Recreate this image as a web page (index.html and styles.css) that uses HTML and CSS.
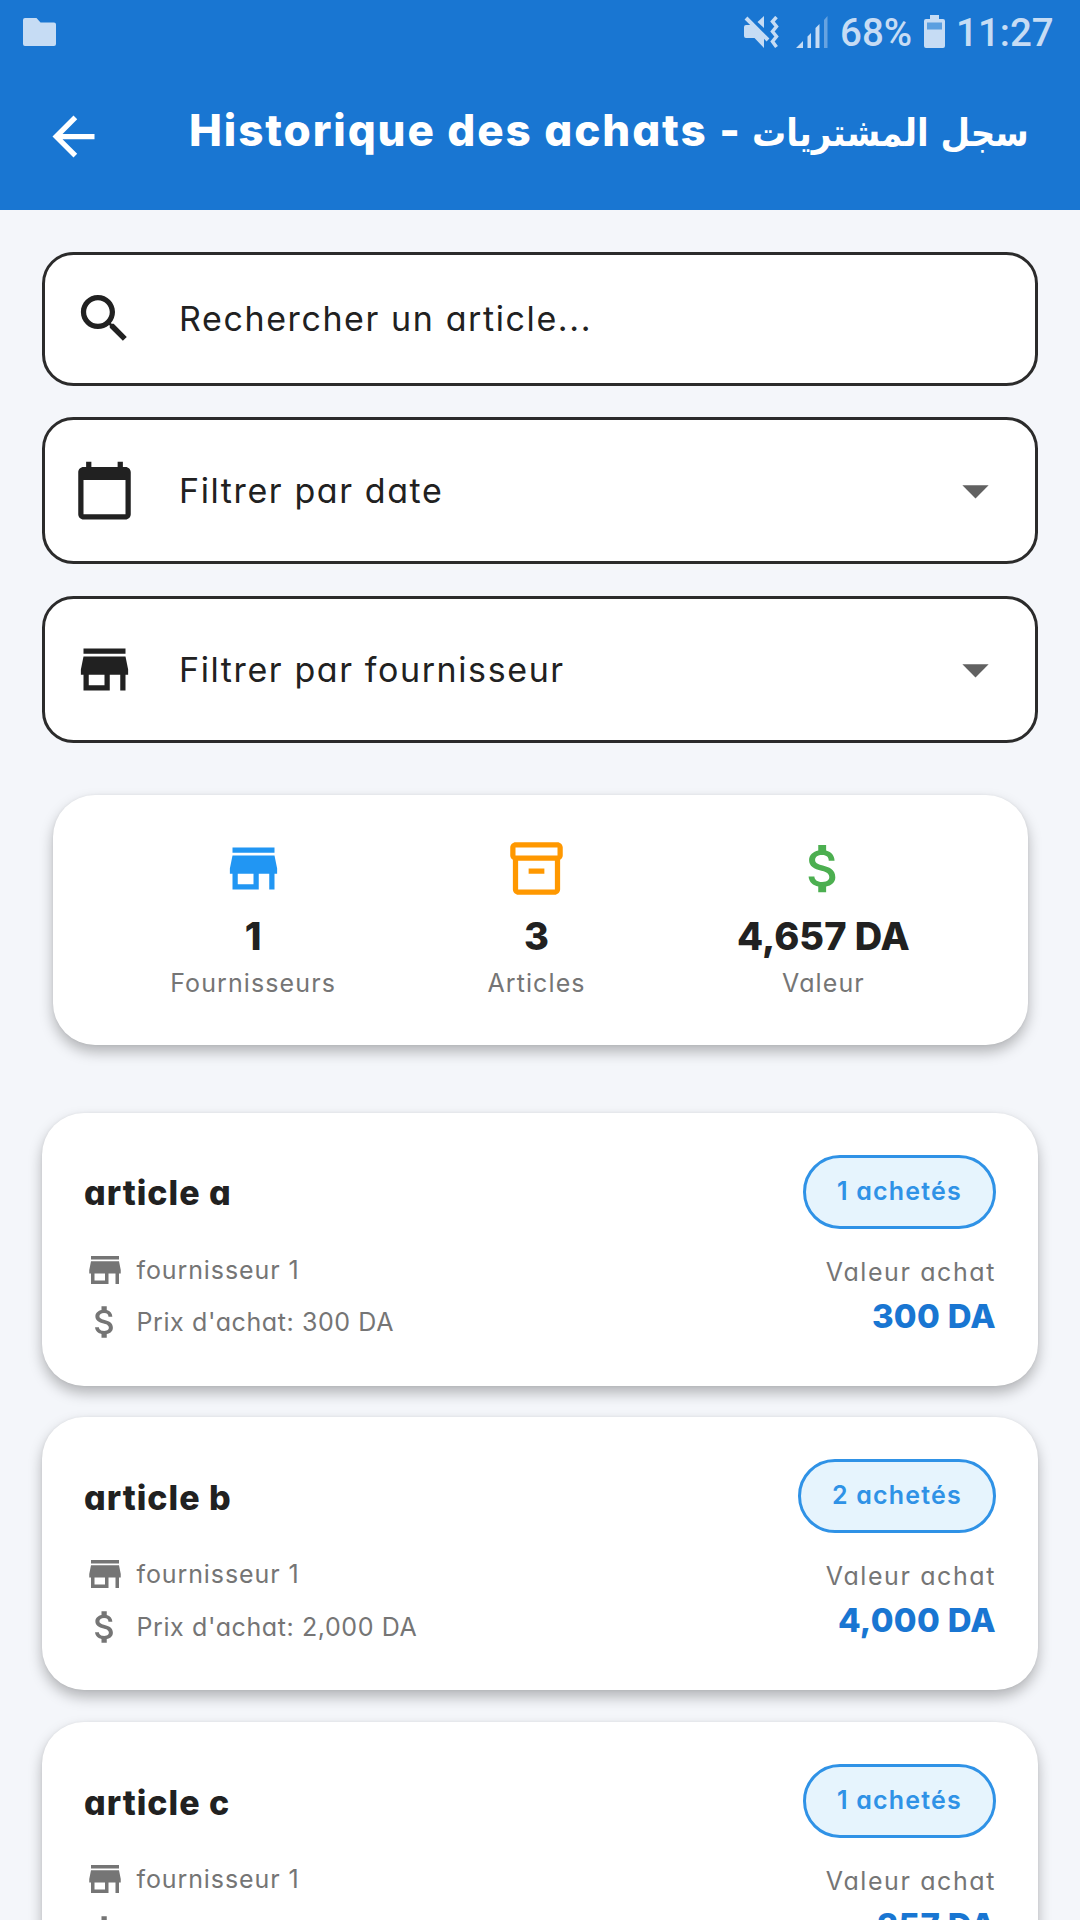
FILE: index.html
```html
<!DOCTYPE html>
<html lang="fr">
<head>
  <meta charset="UTF-8">
  <title>Historique des achats</title>
  <link rel="stylesheet" href="styles.css">
</head>
<body>
  <!-- shared icons -->
  <svg class="sprite" width="0" height="0">
    <symbol id="store" viewBox="0 0 24 24"><path d="M20 4H4v2h16V4zm1 10v-2l-1-5H4l-1 5v2h1v6h10v-6h4v6h2v-6h1zm-9 4H6v-4h6v4z"/></symbol>
    <symbol id="money" viewBox="0 0 24 24"><path d="M11.8 10.9c-2.27-.59-3-1.2-3-2.15 0-1.09 1.01-1.85 2.7-1.85 1.78 0 2.44.85 2.5 2.1h2.21c-.07-1.72-1.12-3.3-3.21-3.81V3h-3v2.16c-1.94.42-3.5 1.68-3.5 3.61 0 2.31 1.91 3.46 4.7 4.13 2.5.6 3 1.48 3 2.41 0 .69-.49 1.79-2.7 1.79-2.06 0-2.87-.92-2.98-2.1h-2.2c.12 2.19 1.76 3.42 3.68 3.83V21h3v-2.15c1.95-.37 3.5-1.5 3.5-3.55 0-2.84-2.43-3.81-4.7-4.4z"/></symbol>
    <symbol id="drop" viewBox="0 0 24 24"><path d="M7 10l5 5 5-5z"/></symbol>
  </svg>

  <header class="header">
    <div class="status-bar">
      <svg class="status-folder" viewBox="0 0 33 28"><path d="M2 0h11.500l4 4.500H31a2 2 0 0 1 2 2V26a2 2 0 0 1-2 2H2a2 2 0 0 1-2-2V2a2 2 0 0 1 2-2z"/></svg>
      <svg class="status-mute" viewBox="0 0 35 32">
        <path d="M0 11a2 2 0 0 1 2-2h7.500L20 20.500V32l-9.500-10H2a2 2 0 0 1-2-2z"/>
        <path d="M20 0v12l-6.500-6z"/>
        <path class="line" d="M2 2l22 22"/>
        <path class="wave" d="M32.500 1l-4 4.500 4 5-4 5 4 5-4 5 4 5.500"/>
      </svg>
      <svg class="status-signal" viewBox="0 0 32 32">
        <path d="M0 32l7-7v7zM11.500 20.500l3.500-3.500v15h-3.500zM19.500 12l4-4v24h-4z"/>
        <path class="dim" d="M28 4l3.500-4v32H28z"/>
      </svg>
      <span class="status-percent">68%</span>
      <svg class="status-battery" viewBox="0 0 21 33">
        <path d="M6 0h9v4h4a2 2 0 0 1 2 2v25a2 2 0 0 1-2 2H2a2 2 0 0 1-2-2V6a2 2 0 0 1 2-2h4z"/>
        <path class="level" d="M3 7.500h15v7H3z"/>
      </svg>
      <span class="status-time">11:27</span>
    </div>
    <div class="app-bar">
      <svg class="icon" viewBox="0 0 24 24"><path d="M20 11H7.830l5.590-5.590L12 4l-8 8 8 8 1.410-1.410L7.830 13H20v-2z"/></svg>
      <h1 class="title"><span class="title-fr">Historique des achats -</span><span class="title-ar" lang="ar" dir="rtl">سجل المشتريات</span></h1>
    </div>
  </header>

  <main class="content">
    <div class="filters">
      <div class="field search">
        <svg class="icon" viewBox="0 0 24 24"><path d="M15.500 14h-.79l-.28-.27C15.410 12.590 16 11.110 16 9.500 16 5.910 13.090 3 9.500 3S3 5.910 3 9.500 5.910 16 9.500 16c1.610 0 3.090-.59 4.230-1.570l.27.28v.79l5 4.990L20.490 19l-4.990-5zm-6 0C7.010 14 5 11.990 5 9.500S7.010 5 9.500 5 14 7.010 14 9.500 11.990 14 9.500 14z"/></svg>
        <span class="field-text">Rechercher un article...</span>
      </div>
      <div class="field">
        <svg class="icon" viewBox="0 0 24 24"><path d="M20 3h-1V1h-2v2H7V1H5v2H4c-1.100 0-2 .9-2 2v16c0 1.100.9 2 2 2h16c1.100 0 2-.9 2-2V5c0-1.100-.9-2-2-2zm0 18H4V8h16v13z"/></svg>
        <span class="field-text">Filtrer par date</span>
        <svg class="icon drop"><use href="#drop"/></svg>
      </div>
      <div class="field">
        <svg class="icon"><use href="#store"/></svg>
        <span class="field-text">Filtrer par fournisseur</span>
        <svg class="icon drop"><use href="#drop"/></svg>
      </div>
    </div>

    <section class="stats">
      <div class="stat">
        <svg class="icon blue"><use href="#store"/></svg>
        <strong class="stat-value">1</strong>
        <span class="stat-label">Fournisseurs</span>
      </div>
      <div class="stat">
        <svg class="icon orange" viewBox="0 0 24 24"><path d="M20 2H4c-1 0-2 .9-2 2v3.010c0 .72.43 1.340 1 1.690V20c0 1.100 1.100 2 2 2h14c.9 0 2-.9 2-2V8.700c.57-.35 1-.97 1-1.690V4c0-1.100-1-2-2-2zm-1 18H5V9h14v11zm1-13H4V4h16v3z"/><path d="M9 12h6v2H9z"/></svg>
        <strong class="stat-value">3</strong>
        <span class="stat-label">Articles</span>
      </div>
      <div class="stat">
        <svg class="icon green"><use href="#money"/></svg>
        <strong class="stat-value">4,657 DA</strong>
        <span class="stat-label">Valeur</span>
      </div>
    </section>

    <section class="articles">
      <article class="card">
        <div class="card-top">
          <h2 class="card-title">article a</h2>
          <span class="badge">1 achetés</span>
        </div>
        <div class="card-bottom">
          <div class="details">
            <div class="detail"><svg class="icon-small"><use href="#store"/></svg><span>fournisseur 1</span></div>
            <div class="detail price"><svg class="icon-small"><use href="#money"/></svg><span>Prix d'achat: 300 DA</span></div>
          </div>
          <div class="total">
            <span class="total-label">Valeur achat</span>
            <strong class="total-value">300 DA</strong>
          </div>
        </div>
      </article>

      <article class="card">
        <div class="card-top">
          <h2 class="card-title">article b</h2>
          <span class="badge">2 achetés</span>
        </div>
        <div class="card-bottom">
          <div class="details">
            <div class="detail"><svg class="icon-small"><use href="#store"/></svg><span>fournisseur 1</span></div>
            <div class="detail price"><svg class="icon-small"><use href="#money"/></svg><span>Prix d'achat: 2,000 DA</span></div>
          </div>
          <div class="total">
            <span class="total-label">Valeur achat</span>
            <strong class="total-value">4,000 DA</strong>
          </div>
        </div>
      </article>

      <article class="card">
        <div class="card-top">
          <h2 class="card-title">article c</h2>
          <span class="badge">1 achetés</span>
        </div>
        <div class="card-bottom">
          <div class="details">
            <div class="detail"><svg class="icon-small"><use href="#store"/></svg><span>fournisseur 1</span></div>
            <div class="detail price"><svg class="icon-small"><use href="#money"/></svg><span>Prix d'achat: 357 DA</span></div>
          </div>
          <div class="total">
            <span class="total-label">Valeur achat</span>
            <strong class="total-value">357 DA</strong>
          </div>
        </div>
      </article>
    </section>
  </main>
</body>
</html>
```
FILE: styles.css
```css
* {
  box-sizing: border-box;
}

body {
  margin: 0;
  height: 1920px;
  overflow: hidden;
  background-color: #f4f6fa;
  color: #212121;
  font-family: 'Inter', 'Open Sans', sans-serif;
  font-feature-settings: 'cv11';
  white-space: nowrap;
}

svg {
  display: block;
  flex-shrink: 0;
  fill: currentColor;
}

.sprite {
  display: none;
}

.icon {
  width: 63px;
  height: 63px;
}

/* Header */
.header {
  height: 210px;
  background-color: #1976d2;
  color: #fff;
}

.status-bar {
  display: flex;
  align-items: center;
  height: 63px;
  padding: 0 26px 0 23px;
  color: #c6dcf4;
  font-family: 'Roboto', sans-serif;
  font-size: 38.5px;
  font-weight: 500;
  line-height: 60px;
}

.status-folder {
  width: 33px;
  height: 28px;
  margin-right: auto;
}

.status-mute {
  width: 35px;
  height: 32px;
  margin-right: 17px;
}

.status-mute .line {
  fill: none;
  stroke: currentColor;
  stroke-width: 4;
}

.status-mute .wave {
  fill: none;
  stroke: currentColor;
  stroke-width: 3.5;
}

.status-signal {
  width: 32px;
  height: 32px;
  margin-right: 12px;
}

.status-signal .dim {
  opacity: 0.45;
}

.status-percent {
  width: 84px;
  padding-top: 3px;
}

.status-battery {
  width: 21px;
  height: 33px;
  margin-right: 11px;
}

.status-battery .level {
  fill: #5b9fe0;
}

.status-time {
  width: 98px;
  padding-top: 3px;
}

.app-bar {
  display: flex;
  align-items: center;
  height: 147px;
  padding-left: 42px;
}

.title {
  display: flex;
  align-items: baseline;
  margin: 0 0 11px 84px;
  font-size: 44px;
  font-weight: 800;
  line-height: 60px;
}

.title-fr {
  width: 563px;
  letter-spacing: 1.9px;
}

.title-ar {
  font-family: 'DejaVu Sans Condensed', 'DejaVu Sans', sans-serif;
  font-size: 37.8px;
  font-stretch: condensed;
  font-weight: 700;
}

/* Filters */
.content {
  padding: 42px;
}

.filters {
  display: flex;
  flex-direction: column;
  gap: 31.5px;
}

.field {
  display: flex;
  align-items: center;
  height: 147px;
  padding: 0 28.5px 0 28px;
  border: 3px solid #2b2b2b;
  border-radius: 31.5px;
  background-color: #fff;
}

.search {
  height: 133.5px;
}

.field-text {
  flex: 1;
  padding-left: 43px;
  font-size: 34px;
  letter-spacing: 1.6px;
}

.drop {
  color: #616161;
}

/* Summary */
.stats {
  display: flex;
  justify-content: space-around;
  height: 249.5px;
  margin: 52.5px 10.5px 0;
  padding: 41.5px 42px;
  border-radius: 42px;
  background-color: #fff;
  box-shadow: 0 7px 14px rgba(0, 0, 0, 0.27), 0 0 3px rgba(0, 0, 0, 0.06);
}

.stat {
  display: flex;
  flex-direction: column;
  align-items: center;
}

.stat-value {
  margin-top: 8px;
  font-size: 38px;
  font-weight: 800;
  line-height: 57px;
}

.stat-label {
  font-size: 25px;
  line-height: 37px;
  letter-spacing: 1.1px;
  color: #757575;
}

.blue {
  color: #2196f3;
}

.orange {
  color: #ff9800;
}

.green {
  color: #4caf50;
}

/* Article list */
.articles {
  display: flex;
  flex-direction: column;
  gap: 31.8px;
  margin-top: 68px;
}

.card {
  height: 273px;
  padding: 42px;
  border-radius: 42px;
  background-color: #fff;
  box-shadow: 0 7px 14px rgba(0, 0, 0, 0.27), 0 0 3px rgba(0, 0, 0, 0.06);
}

.card-top {
  display: flex;
  align-items: center;
  justify-content: space-between;
  height: 74px;
}

.card-title {
  margin: 2px 0 0;
  font-size: 34px;
  font-weight: 800;
  letter-spacing: 1px;
}

.badge {
  height: 74px;
  padding: 0 31px;
  border: 3px solid #2f92e6;
  border-radius: 37px;
  background-color: #e6f4fd;
  color: #2f92e6;
  font-size: 25px;
  font-weight: 600;
  line-height: 66px;
  letter-spacing: 1.2px;
}

.card-bottom {
  display: flex;
  justify-content: space-between;
  margin-top: 20px;
}

.details {
  display: flex;
  flex-direction: column;
  gap: 10.5px;
}

.detail {
  display: flex;
  align-items: center;
  gap: 10.5px;
  height: 42px;
  font-size: 25px;
  letter-spacing: 0.9px;
  color: #757575;
}

.price {
  letter-spacing: 0.6px;
}

.icon-small {
  width: 42px;
  height: 42px;
}

.total {
  display: flex;
  flex-direction: column;
  align-items: flex-end;
  padding-top: 5px;
}

.total-label {
  font-size: 25px;
  line-height: 37px;
  letter-spacing: 1.6px;
  color: #757575;
}

.total-value {
  font-size: 33px;
  font-weight: 800;
  line-height: 50px;
  letter-spacing: 0.3px;
  color: #1976d2;
}
```
